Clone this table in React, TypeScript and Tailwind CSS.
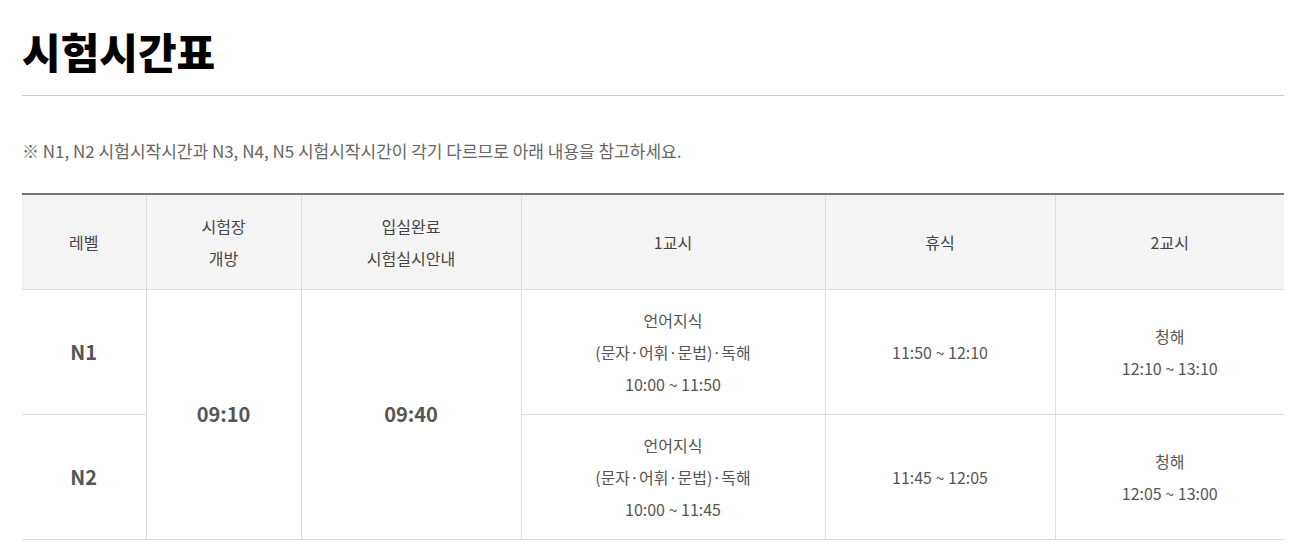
const rows = [
  {
    level: "N1",
    first: ["언어지식", "(문자·어휘·문법)·독해", "10:00 ~ 11:50"],
    rest: "11:50 ~ 12:10",
    second: ["청해", "12:10 ~ 13:10"],
  },
  {
    level: "N2",
    first: ["언어지식", "(문자·어휘·문법)·독해", "10:00 ~ 11:45"],
    rest: "11:45 ~ 12:05",
    second: ["청해", "12:05 ~ 13:00"],
  },
];

const th = "border border-[#dddddd] border-t-0 font-normal align-middle text-center";
const td = "border border-[#dddddd] align-middle text-center";

export default function App() {
  return (
    <div
      className="bg-white pl-[22px] pr-[10px] pt-[22px] pb-[8px] text-[#555555]"
      style={{ fontFamily: '"Noto Sans CJK KR", "Noto Sans", sans-serif' }}
    >
      <h1 className="text-[42px] font-black leading-[58px] text-black">시험시간표</h1>
      <div className="mt-[15px] border-b border-[#cccccc]" />
      <p className="mt-[43px] text-[17px] leading-[24px] text-[#666666]">
        ※ N1, N2 시험시작시간과 N3, N4, N5 시험시작시간이 각기 다르므로 아래 내용을 참고하세요.
      </p>
      <table className="mt-[30px] w-full border-collapse border-t-2 border-t-[#777777] text-[16px] leading-[32px]">
        <colgroup>
          <col className="w-[124px]" />
          <col className="w-[155px]" />
          <col className="w-[220px]" />
          <col className="w-[304px]" />
          <col className="w-[230px]" />
          <col />
        </colgroup>
        <thead>
          <tr className="h-[95px] bg-[#f4f4f4] text-[#444444]">
            <th className={`${th} border-l-0`}>레벨</th>
            <th className={th}>
              시험장
              <br />
              개방
            </th>
            <th className={th}>
              입실완료
              <br />
              시험실시안내
            </th>
            <th className={th}>1교시</th>
            <th className={th}>휴식</th>
            <th className={`${th} border-r-0`}>2교시</th>
          </tr>
        </thead>
        <tbody>
          {rows.map((r, i) => (
            <tr key={r.level} className="h-[125px]">
              <td className={`${td} border-l-0 text-[20px] font-bold`}>{r.level}</td>
              {i === 0 && (
                <>
                  <td rowSpan={2} className={`${td} text-[20px] font-bold`}>
                    09:10
                  </td>
                  <td rowSpan={2} className={`${td} text-[20px] font-bold`}>
                    09:40
                  </td>
                </>
              )}
              <td className={td}>
                {r.first.map((l) => (
                  <div key={l}>{l}</div>
                ))}
              </td>
              <td className={td}>{r.rest}</td>
              <td className={`${td} border-r-0`}>
                {r.second.map((l) => (
                  <div key={l}>{l}</div>
                ))}
              </td>
            </tr>
          ))}
        </tbody>
      </table>
    </div>
  );
}
